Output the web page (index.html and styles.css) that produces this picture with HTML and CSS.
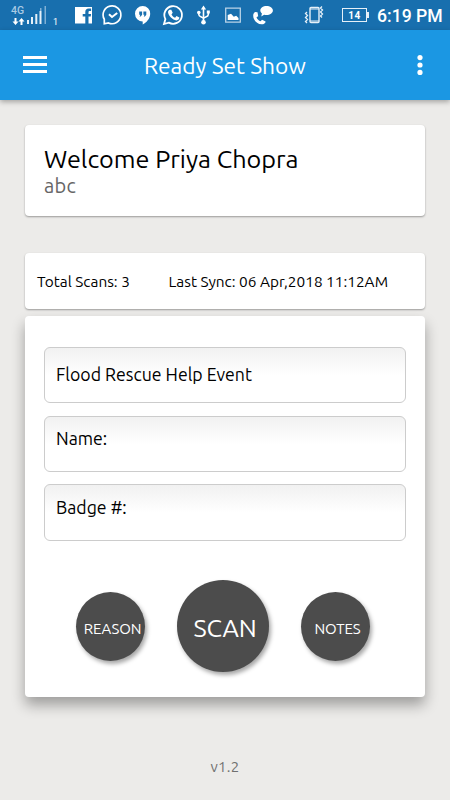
FILE: index.html
```html
<!DOCTYPE html>
<html lang="en">
<head>
    <meta charset="UTF-8">
    <meta name="viewport" content="width=device-width, initial-scale=1.0">
    <title>Ready Set Show</title>
    <link rel="stylesheet" href="styles.css">
</head>
<body>
    <div class="status-bar">
        <div class="signal">
            <div class="signal-type">
                <span>4G</span>
                <svg width="13" height="7" viewBox="0 0 13 7" fill="#fff"><path d="M2.500 0h2v3.500h2L3.500 7 .5 3.500h2zM8.500 7h2V3.500h2L9.500 0l-3 3.500h2z"/></svg>
            </div>
            <svg class="signal-bars" width="20" height="18" viewBox="0 0 20 18"><path fill="#e6f0f8" d="M0 14h2v4H0zM4 11h2v7H4zM8.300 8h2v10h-2zM12.500 5h2v13h-2z"/><path fill="#7fb0d5" d="M17.500 0h1.500v18h-1.500zM13 2h1.500v3H13z"/></svg>
            <span class="sim">1</span>
        </div>
        <svg class="notice-icons" width="200" height="30" viewBox="75 0 200 30">
            <!-- facebook -->
            <path fill="#fff" d="M75 7h17v16.500h-3.500v-7h2.200l.4-2.600h-2.600v-1.500c0-.9.400-1.300 1.300-1.300h1.300V8.600h-2.300c-2.400 0-3.500 1.300-3.500 3.400v1.900h-2.600v2.600h2.600v7H75z"/>
            <!-- messenger -->
            <path fill="none" stroke="#fff" stroke-width="1.700" d="M104.300 23.800v-4.500a8.900 8.900 0 1 1 4.200 3.700z"/>
            <path fill="none" stroke="#fff" stroke-width="2" d="M109 14.200l3 2.800 5.200-4"/>
            <!-- hangouts -->
            <path fill="#fff" d="M142.700 6a7.500 7.500 0 0 1 7.500 7.700c0 5-4 9-7.500 10.800v-3.100A7.700 7.700 0 1 1 142.700 6z"/>
            <path fill="#186fae" d="M139.200 11.500h2.900v3.300l-1.400 1.700h-1.100l.7-1.700h-1.100zM143.400 11.500h2.900v3.300l-1.400 1.700h-1.100l.7-1.700h-1.100z"/>
            <!-- whatsapp -->
            <path fill="none" stroke="#fff" stroke-width="1.800" d="M164 24l1.400-4.900a8.800 8.800 0 1 1 3.400 3.500z"/>
            <path fill="#fff" d="M169.800 9.800h1.500l1.400 3-1.200 1.600c.8 1.600 2 2.600 3.600 3.300l1.400-1.600 2.900 1.500c.1 1.600-1.300 2.800-3 2.800-3.800-.3-8-4.500-8.400-8.100 0-1.100.7-2.200 1.800-2.500z"/>
            <!-- usb -->
            <path fill="none" stroke="#fff" stroke-width="1.600" d="M203.500 22V8M198.800 12v2.500c0 3 4.700 2 4.700 4.500M208.300 12v2.500c0 3-4.800 2-4.800 4.500"/>
            <path fill="#fff" d="M203.500 5.500l2.600 4h-5.200zM206.800 10.500h3v3h-3z"/><circle cx="198.800" cy="12.500" r="1.800" fill="#fff"/><circle cx="203.500" cy="22.300" r="2.300" fill="#fff"/>
            <!-- picture -->
            <path fill="none" stroke="#b9d3e7" stroke-width="1.300" d="M225.700 8.200h14.600v14h-14.600z"/>
            <path fill="#fff" d="M227.700 20v-5l3.300-1.200 2.800 3 2.400-1.100 2.300 2.200V20z"/>
            <!-- call with message -->
            <path fill="#fff" d="M266.500 6c3.500 0 6.400 1.800 6.400 4.500s-2.900 4.500-6.400 4.500c-.8 0-1.600-.1-2.400-.3l-2.800 1.800.6-3c-1-.8-1.600-1.900-1.600-3 0-2.700 2.700-4.500 6.200-4.500z"/>
            <path fill="#fff" d="M255 12l2.500.2.700 4.100-1.700 1c.8 2 2.200 3.400 4.100 4l1.400-1.600 3.600 1.700c-.1 1.800-1.700 2.900-4 2.900-4.500-.1-8.400-4.100-8.400-8.500 0-1.700.7-3.100 1.800-3.800z"/>
        </svg>
        <svg class="vibrate" width="21" height="18" viewBox="0 0 21 18" fill="none" stroke="#e6f0f8"><rect x="6" y="1.500" width="9" height="15" rx="1" stroke-width="1.400"/><path stroke-width="1.200" d="M6 3h9M6 15h9"/><path stroke-width="1.300" d="M3 6L1.500 7.500l2 2-2 2 2 2-2 2L3 17M18 .5L16.500 2l2 2-2 2 2 2-2 2L18 11.500"/></svg>
        <div class="battery">14</div>
        <span class="clock">6:19 PM</span>
    </div>
    <header class="header">
        <svg width="24" height="18" viewBox="0 0 24 18" fill="#fff"><path d="M0 0h24v3H0zM0 7h24v3H0zM0 14h24v3H0z"/></svg>
        <h1 class="header-title">Ready Set Show</h1>
        <svg class="more" width="6" height="20" viewBox="0 0 6 20" fill="#fff"><circle cx="3" cy="2.600" r="2.600"/><circle cx="3" cy="10" r="2.600"/><circle cx="3" cy="17.400" r="2.600"/></svg>
    </header>
    <main class="content">
        <section class="card welcome">
            <h2 class="welcome-name">Welcome Priya Chopra</h2>
            <p class="welcome-sub">abc</p>
        </section>
        <section class="card stats">
            <span class="total-scans">Total Scans: 3</span>
            <span class="last-sync">Last Sync: 06 Apr,2018 11:12AM</span>
        </section>
        <section class="card scanner">
            <div class="field event">Flood Rescue Help Event</div>
            <div class="field name">Name:</div>
            <div class="field badge">Badge #:</div>
            <div class="actions">
                <button class="btn reason">REASON</button>
                <button class="btn scan">SCAN</button>
                <button class="btn notes">NOTES</button>
            </div>
        </section>
    </main>
    <footer class="version">v1.2</footer>
</body>
</html>
```
FILE: styles.css
```css
:root{
    --white : #fff;
    --blue : #1b97e3;
    --blue-dark : #186fae;
    --body : #ecebe9;
    --dark : #4c4c4c;
}

*{
    padding: 0;
    margin: 0;
    box-sizing: border-box;
}

body{
    background: var(--body);
    font-family: Ubuntu, "Noto Sans", sans-serif;
    color: #000;
    height: 800px;
    overflow: hidden;
    white-space: nowrap;
}

svg{
    display: block;
    flex: none;
}

.status-bar{
    display: flex;
    height: 30px;
    background: var(--blue-dark);
    color: var(--white);
    font-family: Roboto, sans-serif;
}

.signal{
    display: flex;
    width: 75px;
    padding-left: 11px;
}

.signal-type{
    width: 16px;
    padding-top: 5px;
    font-size: 10.5px;
    font-weight: 500;
    line-height: 11px;
    color: #a9cae4;
}

.signal-type svg{
    margin: 2px 0 0 1px;
}

.signal-bars{
    margin-top: 6px;
}

.sim{
    margin: 16px 0 0 6px;
    font-size: 9px;
    line-height: 12px;
}

.vibrate{
    margin: 6px 0 0 29px;
}

.battery{
    position: relative;
    width: 25px;
    height: 14px;
    margin: 8px 0 0 17px;
    border: 1px solid #e6f0f8;
    font-size: 10px;
    font-weight: bold;
    line-height: 13px;
    letter-spacing: 0.5px;
    text-align: center;
}

.battery::after{
    position: absolute;
    content: '';
    right: -3px;
    top: 3px;
    width: 2px;
    height: 6px;
    background: #e6f0f8;
}

.clock{
    margin-left: 10px;
    font-size: 17.6px;
    font-weight: 500;
    line-height: 32px;
}

.header{
    display: flex;
    align-items: center;
    height: 70px;
    padding: 0 27px 0 23px;
    background: var(--blue);
    color: var(--white);
    box-shadow: 0 2px 5px rgba(0, 0, 0, 0.3);
}

.header-title{
    margin-left: 97px;
    font-size: 22.7px;
    font-weight: normal;
}

.more{
    margin-left: auto;
}

.content{
    padding: 25px 25px 0;
}

.card{
    background: var(--white);
    border-radius: 4px;
    box-shadow: 0 1px 2px rgba(0, 0, 0, 0.35);
}

.welcome{
    height: 91px;
    padding: 18px 19px;
}

.welcome-name{
    font-size: 25.2px;
    font-weight: normal;
    line-height: 33px;
}

.welcome-sub{
    font-size: 20px;
    line-height: 19px;
    letter-spacing: 0.3px;
    color: #666;
}

.stats{
    display: flex;
    align-items: center;
    height: 56px;
    margin-top: 37px;
    padding-left: 12px;
    font-size: 15.4px;
}

.total-scans{
    width: 131.500px;
}

.scanner{
    height: 381px;
    margin-top: 7px;
    padding: 31px 19px 0;
    box-shadow: 0 8px 14px rgba(0, 0, 0, 0.33);
}

.field{
    height: 56.500px;
    margin-bottom: 12px;
    padding-left: 11px;
    border: 1px solid #ccc;
    border-radius: 6px;
    background: linear-gradient(#f1f1f1, #fff 50%);
    font-size: 17.7px;
    line-height: 44px;
}

.event{
    height: 56px;
    margin-bottom: 12.500px;
    line-height: 54px;
}

.badge{
    line-height: 45px;
}

.actions{
    display: flex;
    align-items: center;
    justify-content: space-between;
    margin-top: 39px;
    padding: 0 36px 0 32px;
}

.btn{
    width: 69px;
    height: 69px;
    padding: 4px 0 0 4px;
    border: none;
    border-radius: 50%;
    background: var(--dark);
    color: var(--white);
    font-family: inherit;
    font-size: 15px;
    letter-spacing: -0.1px;
    box-shadow: 2px 3px 4px rgba(0, 0, 0, 0.35);
}

.reason,
.notes{
    margin-top: 1px;
}

.scan{
    width: 92px;
    height: 92px;
    font-size: 25.2px;
}

.version{
    margin-top: 61px;
    font-size: 15px;
    letter-spacing: 0.3px;
    text-align: center;
    color: #707070;
}
```
